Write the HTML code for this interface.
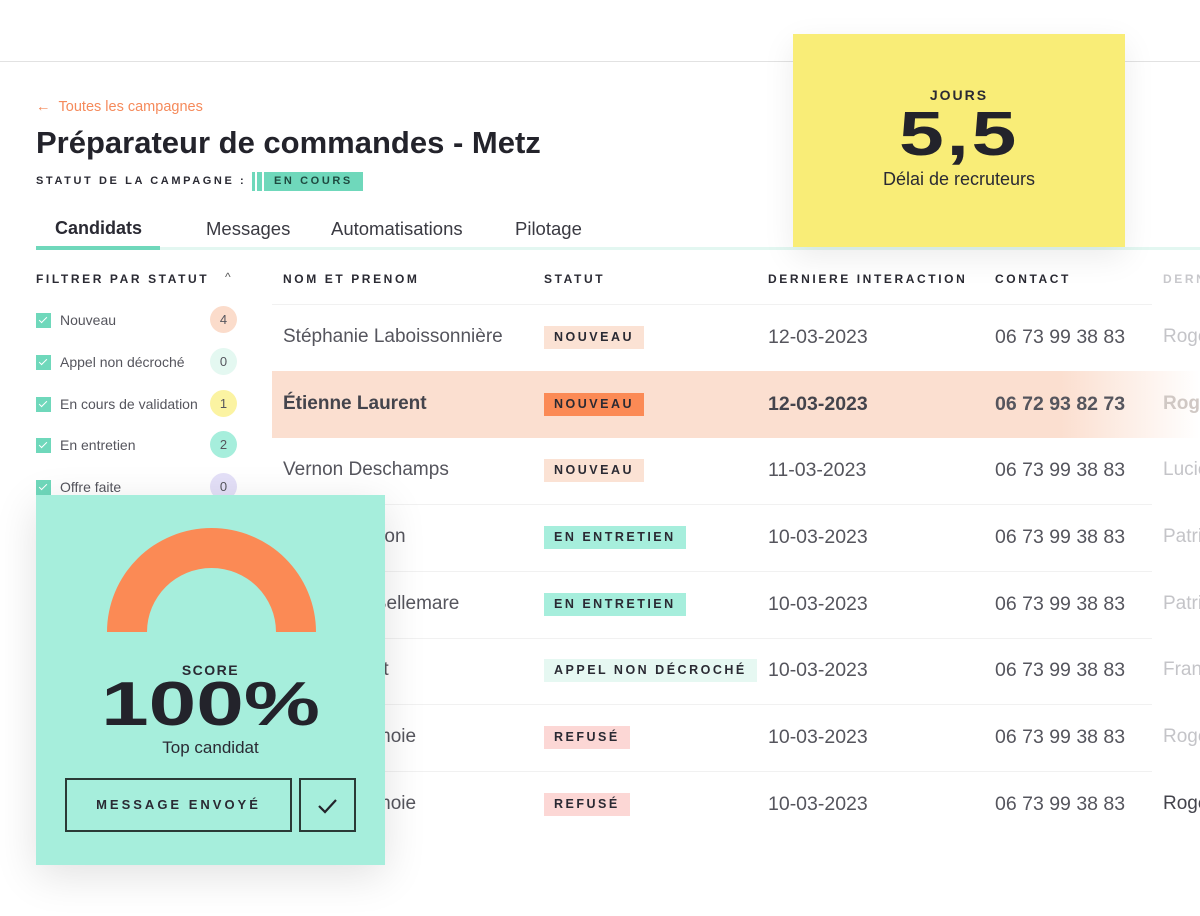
<!DOCTYPE html>
<html><head><meta charset="utf-8"><style>
*{margin:0;padding:0;box-sizing:border-box}
body{width:1200px;height:916px;background:#fff;position:relative;overflow:hidden;font-family:"Liberation Sans",sans-serif;color:#2a2a33}
.a{position:absolute;white-space:nowrap}
.cap{letter-spacing:2.6px;font-weight:bold;font-size:12px;color:#2a2a33}
.row{position:absolute;left:272px;width:880px;height:1px;background:#f1f1f1}
.name{position:absolute;left:283px;font-size:19px;color:#55555d}
.b{position:absolute;left:544px;height:23px;padding:0 10px;line-height:23px;font-size:12.5px;font-weight:bold;letter-spacing:2.5px;color:#2a2a33}
.d{position:absolute;left:768px;font-size:19.5px;color:#55555d}
.c{position:absolute;left:995px;font-size:19.5px;color:#55555d}
.l{position:absolute;left:1163px;font-size:19px;color:#c4c4c8}
.nv{background:#fbe2d4}.ee{background:#a6eedc}.ap{background:#e6f8f2}.rf{background:#fcd7d5}
.f{position:absolute;left:36px;font-size:14px;color:#55555d}
.f i{display:inline-block;width:15px;height:15px;background:#6fd8bb;vertical-align:-3px;margin-right:9px;position:relative}
.f i:after{content:"";position:absolute;left:5px;top:2px;width:3px;height:7px;border:solid #fff;border-width:0 1.5px 1.5px 0;transform:rotate(45deg)}
.cnt{position:absolute;left:210px;width:27px;height:27px;border-radius:50%;text-align:center;line-height:27px;font-size:13px;color:#55555d}
</style></head><body>
<div class="a" style="left:0;top:61px;width:1200px;height:1px;background:#e2e2e2"></div>
<div class="a" style="left:36px;top:99px;font-size:14.5px;color:#f58a5b">←&nbsp;&nbsp;Toutes les campagnes</div>
<div class="a" style="left:36px;top:125px;font-size:31px;font-weight:bold;color:#23232b">Préparateur de commandes - Metz</div>
<div class="a cap" style="left:36px;top:175px;font-size:11px">STATUT DE LA CAMPAGNE :</div>
<div class="a" style="left:252px;top:172px;width:3px;height:19px;background:#6fd8bb"></div>
<div class="a" style="left:257px;top:172px;width:5px;height:19px;background:#6fd8bb"></div>
<div class="a cap" style="left:264px;top:172px;height:19px;line-height:19px;padding:0 10px;background:#6fd8bb;font-size:11px;color:#1e4a40">EN COURS</div>
<div class="a" style="left:55px;top:218px;font-size:18px;font-weight:bold">Candidats</div>
<div class="a" style="left:206px;top:218px;font-size:18.5px;color:#3a3a42">Messages</div>
<div class="a" style="left:331px;top:218px;font-size:18.5px;color:#3a3a42">Automatisations</div>
<div class="a" style="left:515px;top:218px;font-size:18.5px;color:#3a3a42">Pilotage</div>
<div class="a" style="left:36px;top:247px;width:1164px;height:3px;background:#e3f7f1"></div>
<div class="a" style="left:36px;top:246px;width:124px;height:4px;background:#6fd8bb"></div>

<div class="a cap" style="left:36px;top:272px">FILTRER PAR STATUT</div>
<div class="a" style="left:225px;top:270px;font-size:12px;color:#555">^</div>
<div class="f" style="top:312px"><i></i>Nouveau</div><div class="cnt" style="top:306px;background:#fbdccb">4</div>
<div class="f" style="top:354px"><i></i>Appel non décroché</div><div class="cnt" style="top:348px;background:#e4f8f1">0</div>
<div class="f" style="top:396px"><i></i>En cours de validation</div><div class="cnt" style="top:390px;background:#fbf3a2">1</div>
<div class="f" style="top:437px"><i></i>En entretien</div><div class="cnt" style="top:431px;background:#a6eedc">2</div>
<div class="f" style="top:479px"><i></i>Offre faite</div><div class="cnt" style="top:473px;background:#e4e0f8">0</div>

<div class="a cap" style="left:283px;top:272px">NOM ET PRENOM</div>
<div class="a cap" style="left:544px;top:272px">STATUT</div>
<div class="a cap" style="left:768px;top:272px">DERNIERE INTERACTION</div>
<div class="a cap" style="left:995px;top:272px">CONTACT</div>
<div class="a cap" style="left:1163px;top:272px;color:#c8c8cc">DERNIER</div>

<div class="row" style="top:304px"></div>
<div class="a" style="left:272px;top:371px;width:928px;height:67px;background:linear-gradient(90deg,#fbdfd0 85%,#fff)"></div>
<div class="row" style="top:504px"></div><div class="row" style="top:571px"></div><div class="row" style="top:638px"></div><div class="row" style="top:704px"></div><div class="row" style="top:771px"></div>

<div class="name" style="top:326px">Stéphanie Laboissonnière</div><div class="b nv" style="top:326px">NOUVEAU</div><div class="d" style="top:326px">12-03-2023</div><div class="c" style="top:326px">06 73 99 38 83</div><div class="l" style="top:326px">Roger</div>
<div class="name" style="top:393px;font-weight:bold;color:#44444c">Étienne Laurent</div><div class="b" style="top:393px;background:#fb8a55">NOUVEAU</div><div class="d" style="top:393px;font-weight:bold;color:#44444c">12-03-2023</div><div class="c" style="top:393px;font-weight:bold;color:#55555d">06 72 93 82 73</div><div class="l" style="top:393px;font-weight:bold;color:#d0c8c4">Roger</div>
<div class="name" style="top:459px">Vernon Deschamps</div><div class="b nv" style="top:459px">NOUVEAU</div><div class="d" style="top:459px">11-03-2023</div><div class="c" style="top:459px">06 73 99 38 83</div><div class="l" style="top:459px">Lucie</div>
<div class="name" style="top:526px">Luc Champion</div><div class="b ee" style="top:526px">EN ENTRETIEN</div><div class="d" style="top:526px">10-03-2023</div><div class="c" style="top:526px">06 73 99 38 83</div><div class="l" style="top:526px">Patrick</div>
<div class="name" style="top:593px">Amandine Bellemare</div><div class="b ee" style="top:593px">EN ENTRETIEN</div><div class="d" style="top:593px">10-03-2023</div><div class="c" style="top:593px">06 73 99 38 83</div><div class="l" style="top:593px">Patrick</div>
<div class="name" style="top:659px">Marcel Pinot</div><div class="b ap" style="top:659px">APPEL NON DÉCROCHÉ</div><div class="d" style="top:659px">10-03-2023</div><div class="c" style="top:659px">06 73 99 38 83</div><div class="l" style="top:659px">Franck</div>
<div class="name" style="top:726px">Noémie Lemoie</div><div class="b rf" style="top:726px">REFUSÉ</div><div class="d" style="top:726px">10-03-2023</div><div class="c" style="top:726px">06 73 99 38 83</div><div class="l" style="top:726px">Roger</div>
<div class="name" style="top:793px">Noémie Lemoie</div><div class="b rf" style="top:793px">REFUSÉ</div><div class="d" style="top:793px">10-03-2023</div><div class="c" style="top:793px">06 73 99 38 83</div><div class="l" style="top:793px;color:#44444c">Roger</div>

<div class="a" style="left:793px;top:34px;width:332px;height:213px;background:#f9ed77;box-shadow:0 10px 30px rgba(0,0,0,.08);text-align:center">
<div class="cap" style="margin-top:53px;font-size:14px;letter-spacing:2px">JOURS</div>
<div style="font-size:62px;font-weight:900;line-height:56px;margin-top:4px;letter-spacing:2px;transform:scaleX(1.3);color:#23232b">5,5</div>
<div style="font-size:18px;margin-top:6px;color:#2a2a33">Délai de recruteurs</div>
</div>

<div class="a" style="left:36px;top:495px;width:349px;height:370px;background:#a6eedc;box-shadow:0 10px 40px rgba(0,0,0,.12);text-align:center">
<svg width="349" height="170" style="position:absolute;left:0;top:0"><path d="M71 137 A104.5 104 0 0 1 280 137 L240 137 A64.5 64 0 0 0 111 137 Z" fill="#fb8a55"/></svg>
<div class="cap" style="position:absolute;left:0;width:349px;top:167px;font-size:14px;letter-spacing:1.5px">SCORE</div>
<div style="position:absolute;left:0;width:349px;top:180px;font-size:62px;font-weight:900;line-height:60px;transform:scaleX(1.38);color:#23232b">100%</div>
<div style="position:absolute;left:0;width:349px;top:243px;font-size:17px">Top candidat</div>
<div style="position:absolute;left:29px;top:283px;width:227px;height:54px;border:2px solid #2a3a36;line-height:50px;font-size:13px;font-weight:bold;letter-spacing:3px">MESSAGE ENVOYÉ</div>
<div style="position:absolute;left:263px;top:283px;width:57px;height:54px;border:2px solid #2a3a36"><svg width="53" height="50"><path d="M18 26 L24 32 L35 20" fill="none" stroke="#23232b" stroke-width="2.2"/></svg></div>
</div>
</body></html>
